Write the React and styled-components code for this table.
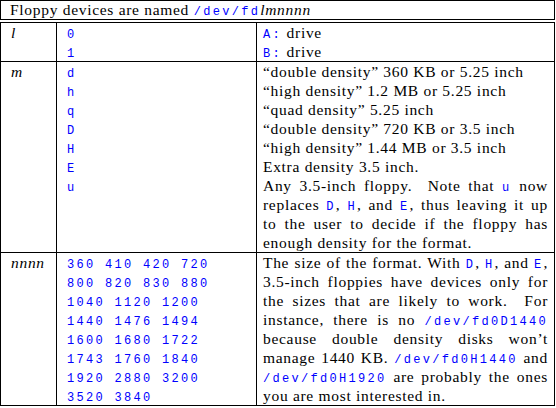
import React from 'react';
import styled, { createGlobalStyle } from 'styled-components';

const GlobalStyle = createGlobalStyle`
    body {
        margin: 0;
        background: #ffffff;
        font-family: 'Liberation Serif', 'Times New Roman', serif;
        color: #000000;
    }
`;

const Page = styled.div`
    width: 555px;
    font-size: 15.5px;
    letter-spacing: 0.7px;
    line-height: 19px;
`;

const Caption = styled.div`
    border: 1px solid #000;
    height: 18px;
    line-height: 18px;
    padding-left: 9px;
    margin-bottom: 2px;
`;

const Table = styled.div`
    display: grid;
    grid-template-columns: 55px 200px 1fr;
    border: 1px solid #000;
`;

const Cell = styled.div`
    border-left: ${(p) => (p.first ? 'none' : '1px solid #000')};
    border-top: ${(p) => (p.top ? 'none' : '1px solid #000')};
    padding: ${(p) => (p.wide ? '0 6px 0 6px' : '0 0 0 10px')};
`;

const Var = styled.span`
    font-style: italic;
`;

const Code = styled.span`
    font-family: 'Liberation Mono', 'Courier New', monospace;
    font-size: 12px;
    letter-spacing: 2.3px;
    color: #0000ff;
`;

const Line = styled.div`
    height: 19px;
    text-align: ${(p) => (p.justify ? 'justify' : 'left')};
    text-align-last: ${(p) => (p.justify ? 'justify' : 'left')};
    white-space: ${(p) => (p.justify ? 'normal' : 'nowrap')};
`;

const rows = [
    {
        name: 'l',
        codes: ['0', '1'],
        text: [
            [<><Code>A:</Code> drive</>],
            [<><Code>B:</Code> drive</>],
        ],
    },
    {
        name: 'm',
        codes: ['d', 'h', 'q', 'D', 'H', 'E', 'u'],
        text: [
            ['“double density” 360 KB or 5.25 inch'],
            ['“high density” 1.2 MB or 5.25 inch'],
            ['“quad density” 5.25 inch'],
            ['“double density” 720 KB or 3.5 inch'],
            ['“high density” 1.44 MB or 3.5 inch'],
            ['Extra density 3.5 inch.'],
            [<>Any 3.5-inch floppy. &nbsp;Note that <Code>u</Code> now</>, true],
            [<>replaces <Code>D</Code>, <Code>H</Code>, and <Code>E</Code>, thus leaving it up</>, true],
            ['to the user to decide if the floppy has', true],
            ['enough density for the format.'],
        ],
    },
    {
        name: 'nnnn',
        codes: [
            '360 410 420 720',
            '800 820 830 880',
            '1040 1120 1200',
            '1440 1476 1494',
            '1600 1680 1722',
            '1743 1760 1840',
            '1920 2880 3200',
            '3520 3840',
        ],
        text: [
            [<>The size of the format. With <Code>D</Code>, <Code>H</Code>, and <Code>E</Code>,</>, true],
            ['3.5-inch floppies have devices only for', true],
            ['the sizes that are likely to work. \u00a0For', true],
            [<>instance, there is no <Code>/dev/fd0D1440</Code></>, true],
            ['because double density disks won’t', true],
            [<>manage 1440 KB. <Code>/dev/fd0H1440</Code> and</>, true],
            [<><Code>/dev/fd0H1920</Code> are probably the ones</>, true],
            ['you are most interested in.'],
        ],
    },
];

export default function App() {
    return (
        <Page>
            <GlobalStyle />
            <Caption>
                Floppy devices are named <Code>/dev/fd</Code>
                <Var>lmnnnn</Var>
            </Caption>
            <Table>
                {rows.map((row, i) => (
                    <React.Fragment key={row.name}>
                        <Cell first top={i === 0}>
                            <Line><Var>{row.name}</Var></Line>
                        </Cell>
                        <Cell top={i === 0}>
                            {row.codes.map((c) => (
                                <Line key={c}><Code>{c}</Code></Line>
                            ))}
                        </Cell>
                        <Cell wide top={i === 0}>
                            {row.text.map(([t, j], k) => (
                                <Line key={k} justify={j}>{t}</Line>
                            ))}
                        </Cell>
                    </React.Fragment>
                ))}
            </Table>
        </Page>
    );
}
